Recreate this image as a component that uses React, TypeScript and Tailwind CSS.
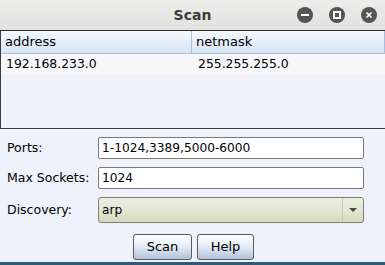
import React from 'react';

const font = { fontFamily: '"DejaVu Sans", "Liberation Sans", sans-serif' };

const TitleButton = ({ kind }: { kind: 'min' | 'max' | 'close' }) => (
  <div className="w-4 h-4 rounded-full bg-[#555555] flex items-center justify-center">
    {kind === 'min' && <div className="w-2 h-[2px] bg-white" />}
    {kind === 'max' && <div className="w-[8px] h-[8px] border-2 border-white" />}
    {kind === 'close' && (
      <svg width="8" height="8" viewBox="0 0 8 8">
        <path d="M1.5 1.5 L6.5 6.5 M6.5 1.5 L1.5 6.5" stroke="white" strokeWidth="1.6" />
      </svg>
    )}
  </div>
);

const Field = ({ label, value }: { label: string; value: string }) => (
  <div className="flex items-center h-[22px]">
    <span className="w-[98px] pl-[7px] text-[12.5px] text-black">{label}</span>
    <div className="w-[266px] h-[22px] bg-white border border-[#7a7a7a] rounded-[2px] px-[3px] flex items-center text-[12.2px] text-black">
      {value}
    </div>
  </div>
);

export default function App() {
  return (
    <div className="w-[385px] h-[265px] bg-[#eff2fa] flex flex-col overflow-hidden" style={font}>
      <div className="h-[31px] bg-gradient-to-b from-[#ececeb] to-[#e2e2e1] border-b border-[#2a2a2a] relative flex items-center justify-center">
        <span className="text-[14px] font-bold text-[#3c3c3c]">Scan</span>
        <div className="absolute right-[8px] top-[7px] flex gap-4">
          <TitleButton kind="min" />
          <TitleButton kind="max" />
          <TitleButton kind="close" />
        </div>
      </div>
      <div className="h-[98px] border-l border-b border-[#3a3a3a] flex flex-col">
        <div className="h-[23px] flex bg-gradient-to-b from-[#f4f8fe] to-[#d7e5f4] border-b border-r border-[#a4c2e0] text-[13px] text-black">
          <div className="w-[191px] border-r border-[#a4c2e0] pl-[4px] flex items-center">address</div>
          <div className="flex-1 pl-[4px] flex items-center">netmask</div>
        </div>
        <div className="h-[21px] flex bg-[#f7f7f9] text-[12.4px] text-black">
          <div className="w-[191px] pl-[5px] flex items-center">192.168.233.0</div>
          <div className="flex-1 pl-[6px] flex items-center">255.255.255.0</div>
        </div>
      </div>
      <div className="flex flex-col gap-[8px] pt-[8px]">
        <Field label="Ports:" value="1-1024,3389,5000-6000" />
        <Field label="Max Sockets:" value="1024" />
        <div className="flex items-center h-[26px]">
          <span className="w-[98px] pl-[7px] text-[12.5px] text-black">Discovery:</span>
          <div className="w-[266px] h-[26px] border border-[#7f806f] rounded-[3px] bg-gradient-to-b from-[#eceee0] via-[#e4e7d4] to-[#d5d9bd] flex items-center text-[12.2px] text-black">
            <span className="flex-1 pl-[3px]">arp</span>
            <div className="w-[21px] h-full border-l border-[#c8cbb4] flex items-center justify-center">
              <svg width="8" height="5" viewBox="0 0 8 5">
                <path d="M0 0 L8 0 L4 4 Z" fill="#4a4a4a" />
              </svg>
            </div>
          </div>
        </div>
        <div className="flex justify-center gap-[5px] pt-[3px] pl-[2px]">
          <button className="w-[59px] h-[26px] border border-[#5c5c5c] rounded-[3px] bg-gradient-to-b from-[#ffffff] via-[#e4ebf4] to-[#aec2da] text-[13px] text-black">Scan</button>
          <button className="w-[57px] h-[26px] border border-[#5c5c5c] rounded-[3px] bg-gradient-to-b from-[#ffffff] via-[#e4ebf4] to-[#aec2da] text-[13px] text-black">Help</button>
        </div>
      </div>
      <div className="mt-auto h-[3px] bg-[#2e5a78]" />
    </div>
  );
}
